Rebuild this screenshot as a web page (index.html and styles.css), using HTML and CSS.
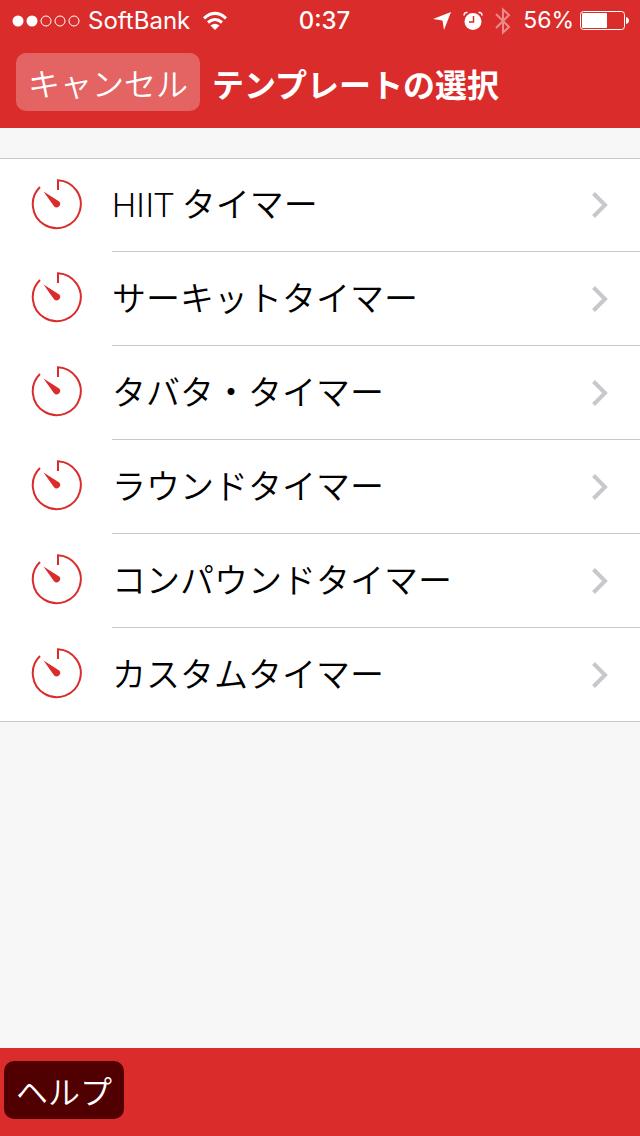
FILE: index.html
```html
<!DOCTYPE html>
<html lang="ja">
<head>
<meta charset="utf-8">
<meta name="viewport" content="width=device-width">
<title>テンプレートの選択</title>
<link rel="stylesheet" href="styles.css">
</head>
<body>
<svg class="defs" aria-hidden="true">
  <symbol id="timer" viewBox="0 0 52 52">
    <path d="M27 12V2.200A24 24 0 1 1 9 9" fill="none" stroke="currentColor" stroke-width="2"/>
    <path d="M12.500 13.500L28.200 23.600A3.300 3.300 0 1 1 23 28.200Z" fill="currentColor"/>
  </symbol>
  <symbol id="chevron" viewBox="0 0 18 28">
    <path d="M2.500 2.500L14 14L2.500 25.500" fill="none" stroke="currentColor" stroke-width="4"/>
  </symbol>
</svg>
<header class="top">
  <div class="status">
    <div class="status-left">
      <svg class="signal" viewBox="0 0 68 12" aria-hidden="true">
        <g fill="#fff"><circle cx="6" cy="6" r="5.500"/><circle cx="20" cy="6" r="5.500"/></g>
        <g fill="none" stroke="#fff"><circle cx="34" cy="6" r="5"/><circle cx="48" cy="6" r="5"/><circle cx="62" cy="6" r="5"/></g>
      </svg>
      <span class="carrier">SoftBank</span>
      <svg class="wifi" viewBox="0 0 26 20" aria-hidden="true">
        <g fill="none" stroke="#fff" stroke-width="3"><path d="M2 7.300Q13 -2.500 24 7.300"/><path d="M6 11.500Q13 5.500 20 11.500"/></g>
        <path d="M13 19L8.500 14.500Q13 11 17.500 14.500Z" fill="#fff"/>
      </svg>
    </div>
    <span class="clock">0:37</span>
    <div class="status-right">
      <svg class="location" viewBox="0 0 18 18" aria-hidden="true"><path d="M18 0L11 18L9.500 8.500L0 7Z" fill="#fff"/></svg>
      <svg class="alarm" viewBox="0 0 20 20" aria-hidden="true">
        <circle cx="10" cy="10.500" r="8.500" fill="#fff"/>
        <path d="M1 4.500Q1 1 4.500 1.500M15.500 1.500Q19 1 19 4.500" fill="none" stroke="#fff" stroke-width="1.500"/>
        <path d="M10.500 5V11H6" fill="none" stroke="#db2c2c" stroke-width="1.500"/>
      </svg>
      <svg class="bluetooth" viewBox="0 0 16 28" aria-hidden="true"><path d="M1 7L14 20L8 25.500V2.500L14 8L1 21" fill="none" stroke="currentColor" stroke-width="2"/></svg>
      <span class="percent">56%</span>
      <svg class="battery" viewBox="0 0 49 20" aria-hidden="true">
        <rect x="0.500" y="0.500" width="44" height="18" rx="3" fill="none" stroke="#fff"/>
        <rect x="2" y="2" width="25" height="15" rx="1" fill="#fff"/>
        <path d="M46 6Q49 7 49 9.500T46 13Z" fill="#fff"/>
      </svg>
    </div>
  </div>
  <div class="nav">
    <button class="btn cancel" type="button">キャンセル</button>
    <h1 class="title">テンプレートの選択</h1>
  </div>
</header>
<main class="content">
  <ul class="list">
    <li><a class="row" href="#"><svg class="timer"><use href="#timer"/></svg><span class="label"><span class="name"><span class="latin">HIIT </span>タイマー</span><svg class="chevron"><use href="#chevron"/></svg></span></a></li>
    <li><a class="row" href="#"><svg class="timer"><use href="#timer"/></svg><span class="label"><span class="name">サーキットタイマー</span><svg class="chevron"><use href="#chevron"/></svg></span></a></li>
    <li><a class="row" href="#"><svg class="timer"><use href="#timer"/></svg><span class="label"><span class="name">タバタ・タイマー</span><svg class="chevron"><use href="#chevron"/></svg></span></a></li>
    <li><a class="row" href="#"><svg class="timer"><use href="#timer"/></svg><span class="label"><span class="name">ラウンドタイマー</span><svg class="chevron"><use href="#chevron"/></svg></span></a></li>
    <li><a class="row" href="#"><svg class="timer"><use href="#timer"/></svg><span class="label"><span class="name">コンパウンドタイマー</span><svg class="chevron"><use href="#chevron"/></svg></span></a></li>
    <li><a class="row" href="#"><svg class="timer"><use href="#timer"/></svg><span class="label"><span class="name">カスタムタイマー</span><svg class="chevron"><use href="#chevron"/></svg></span></a></li>
  </ul>
</main>
<footer class="toolbar">
  <button class="btn help" type="button">ヘルプ</button>
</footer>
</body>
</html>
```
FILE: styles.css
```css
* { box-sizing: border-box; }

body {
  margin: 0;
  min-height: 100vh;
  display: flex;
  flex-direction: column;
  background: #f7f7f7;
  color: #000;
  font-family: Inter, "Noto Sans CJK JP", sans-serif;
}

svg { display: block; flex: none; }
.defs { position: absolute; width: 0; height: 0; }

.top {
  background: #db2c2c;
  color: #fff;
  padding-bottom: 17px;
}

.status {
  display: grid;
  grid-template-columns: 1fr auto 1fr;
  align-items: center;
  height: 41px;
  padding: 0 11px 0 12px;
  font-size: 24px;
  line-height: 41px;
}

.status-left, .status-right { display: flex; align-items: center; }
.status-right { justify-content: flex-end; }
.signal { width: 68px; height: 12px; }
.carrier { margin-left: 8px; }
.wifi { width: 26px; height: 20px; margin-left: 12px; }
.clock { padding-left: 8px; font-weight: 500; }
.location { width: 18px; height: 18px; }
.alarm { width: 20px; height: 20px; margin-left: 12px; }
.bluetooth { width: 16px; height: 28px; margin-left: 12px; color: #ed8a8a; }
.percent { margin-left: 12px; font-size: 23px; }
.battery { width: 49px; height: 20px; margin-left: 6px; }

.nav {
  display: flex;
  align-items: center;
  gap: 12px;
  padding: 12px 16px 0;
}

.btn {
  height: 58px;
  padding: 6px 12px 0;
  border: 0;
  border-radius: 10px;
  color: #fff;
  font-family: inherit;
  font-size: 32px;
  font-weight: 350;
  line-height: 52px;
}

.cancel { background: #e46464; }
.help { background: #500000; }

.title {
  margin: 0;
  padding-top: 8px;
  font-size: 32px;
  font-weight: 700;
  line-height: 50px;
}

.content { flex: 1; padding-top: 30px; }

.list {
  margin: 0;
  padding: 0;
  list-style: none;
  background: #fff;
  border-top: 1px solid #c8c7cc;
  border-bottom: 1px solid #c8c7cc;
}

.row {
  display: flex;
  align-items: center;
  padding-left: 31px;
  color: inherit;
  text-decoration: none;
}

.timer { width: 52px; height: 52px; margin: 0 29px 4px 0; color: #db2c2c; }

.label {
  flex: 1;
  display: flex;
  align-items: center;
  justify-content: space-between;
  height: 94px;
  padding-right: 31px;
  border-bottom: 1px solid #c8c7cc;
  font-size: 34px;
  font-weight: 350;
  line-height: 48px;
}

.latin { font-family: Roboto, sans-serif; font-weight: 300; }

li:first-child .label { height: 93px; }
li:last-child .label { height: 93px; border-bottom: 0; }
.chevron { width: 18px; height: 28px; color: #c7c7cc; }

.toolbar {
  height: 88px;
  padding: 13px 4px;
  background: #db2c2c;
}
```
